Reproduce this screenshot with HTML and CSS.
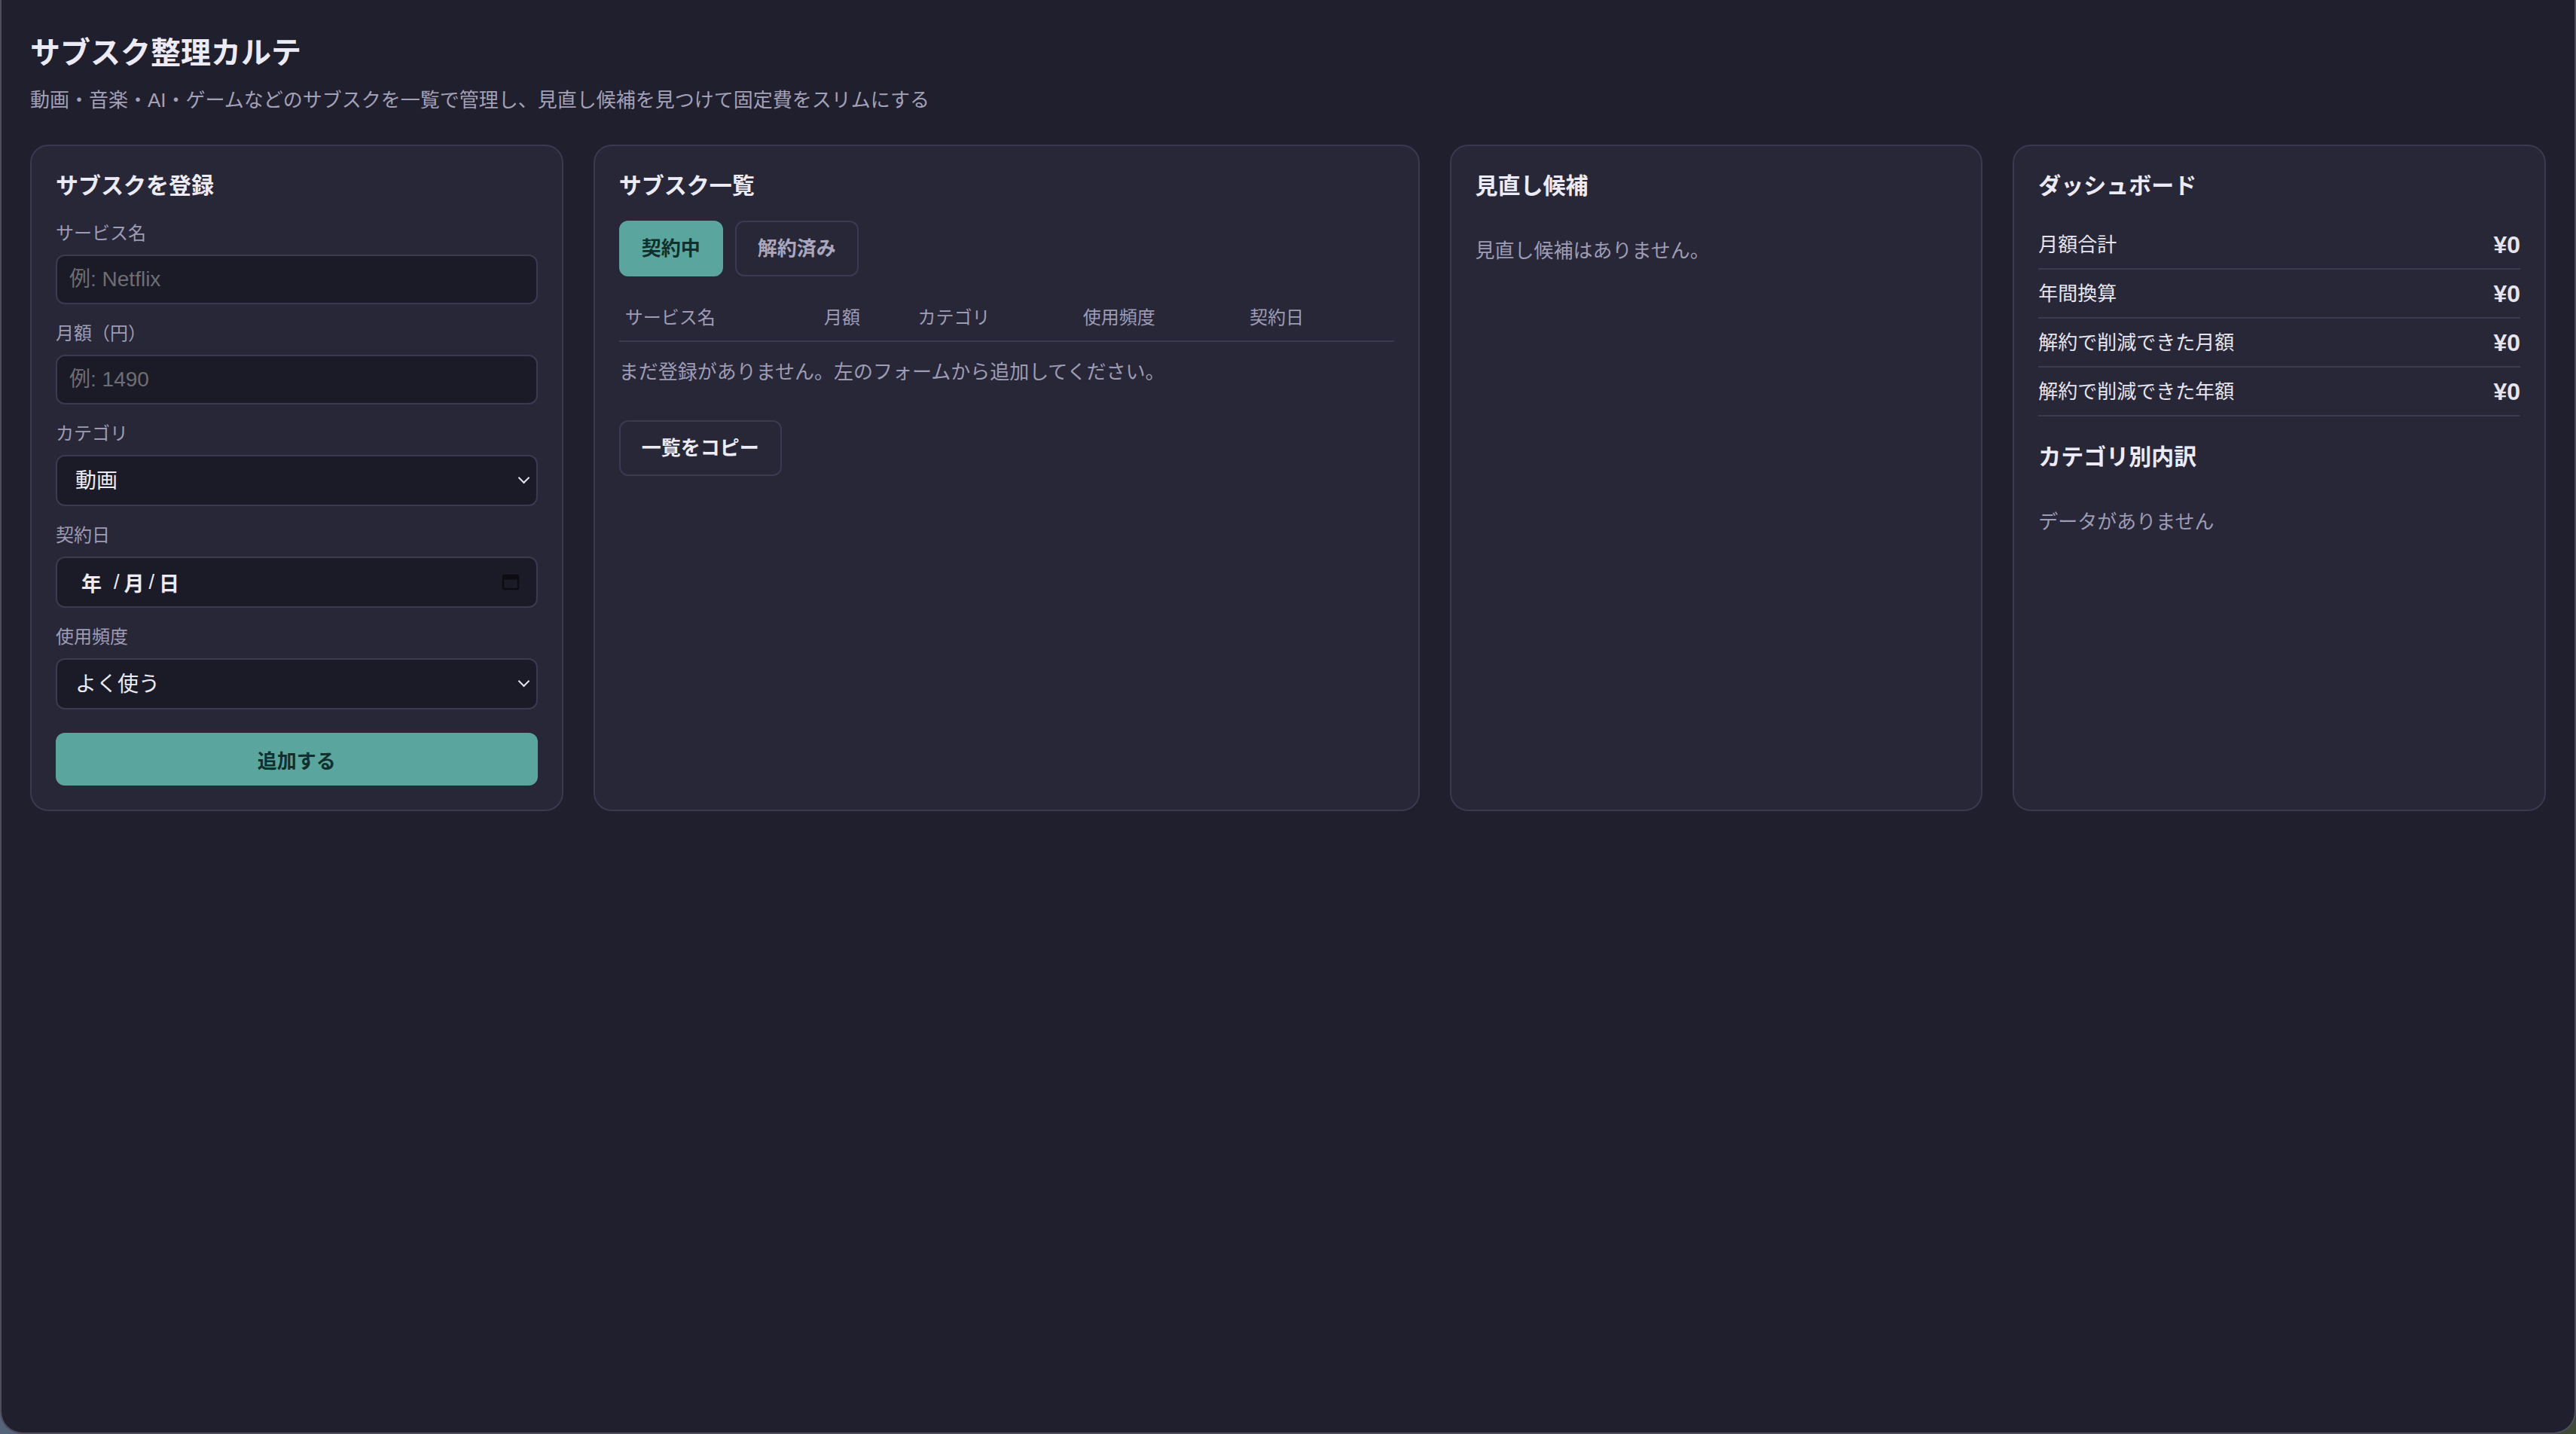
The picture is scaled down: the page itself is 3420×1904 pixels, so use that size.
FILE: index.html
```html
<html>
	<head>
		<meta charset="utf-8">
		<title>サブスク整理カルテ</title>
		<link rel="stylesheet" href="styles.css">
	</head>

	<body>
		<div id="window">
			<h1>サブスク整理カルテ</h1>
			<p class="lead">動画・音楽・AI・ゲームなどのサブスクを一覧で管理し、見直し候補を見つけて固定費をスリムにする</p>

			<div class="board">
				<!-- 登録フォーム -->
				<div class="card">
					<h2>サブスクを登録</h2>
					<div class="field">
						<label>サービス名</label>
						<input type="text" class="input" placeholder="例: Netflix">
					</div>
					<div class="field">
						<label>月額（円）</label>
						<input type="text" class="input" placeholder="例: 1490">
					</div>
					<div class="field">
						<label>カテゴリ</label>
						<div class="select-wrap">
							<select class="input select">
								<option>動画</option>
								<option>音楽</option>
								<option>AI</option>
								<option>ゲーム</option>
								<option>その他</option>
							</select>
						</div>
					</div>
					<div class="field">
						<label>契約日</label>
						<div class="input date">
							<span>年</span><span class="sep first">/</span><span>月</span><span class="sep">/</span><span>日</span>
							<svg class="cal" width="24" height="24" viewBox="0 0 24 24">
								<rect x="2" y="3" width="20" height="18" rx="1.5" fill="none" stroke="#0c0c12" stroke-width="2.4"/>
								<rect x="2" y="3" width="20" height="5.5" fill="#0c0c12"/>
							</svg>
						</div>
					</div>
					<div class="field">
						<label>使用頻度</label>
						<div class="select-wrap">
							<select class="input select">
								<option>よく使う</option>
								<option>たまに使う</option>
								<option>ほぼ使わない</option>
							</select>
						</div>
					</div>
					<button class="btn-primary">追加する</button>
				</div>

				<!-- 一覧 -->
				<div class="card">
					<h2>サブスク一覧</h2>
					<div class="tabs">
						<button class="btn active">契約中</button>
						<button class="btn">解約済み</button>
					</div>
					<table class="list">
						<thead>
							<tr>
								<th class="c-name">サービス名</th>
								<th class="c-price">月額</th>
								<th class="c-cat">カテゴリ</th>
								<th class="c-use">使用頻度</th>
								<th>契約日</th>
							</tr>
						</thead>
					</table>
					<p class="muted list-empty">まだ登録がありません。左のフォームから追加してください。</p>
					<div class="list-actions">
						<button class="btn light">一覧をコピー</button>
					</div>
				</div>

				<!-- 見直し候補 -->
				<div class="card">
					<h2>見直し候補</h2>
					<p class="muted empty">見直し候補はありません。</p>
				</div>

				<!-- ダッシュボード -->
				<div class="card">
					<h2>ダッシュボード</h2>
					<div class="stat"><span>月額合計</span><b>¥0</b></div>
					<div class="stat"><span>年間換算</span><b>¥0</b></div>
					<div class="stat"><span>解約で削減できた月額</span><b>¥0</b></div>
					<div class="stat"><span>解約で削減できた年額</span><b>¥0</b></div>
					<h3>カテゴリ別内訳</h3>
					<p class="muted empty">データがありません</p>
				</div>
			</div>
		</div>
	</body>

</html>
```

FILE: styles.css
```css
* {
	box-sizing: border-box;
}
html, body {
	margin: 0;
	height: 100%;
}
body {
	background: linear-gradient(90deg, #56647a 0%, #3b4752 50%, #3e4a36 100%);
	font-family: "Liberation Sans", "Noto Sans CJK JP", sans-serif;
	color: #ecebf5;
}
#window {
	min-height: 100vh;
	background: #1f1f2d;
	border: 2px solid #4d4d5e;
	border-top: 0;
	border-radius: 0 0 30px 30px;
	padding: 42px 38px;
}
h1 {
	margin: 0 0 17px;
	font-size: 40px;
	line-height: 56px;
	font-weight: bold;
}
.lead {
	margin: 0 0 41px;
	font-size: 26px;
	line-height: 36px;
	color: #a3a1b8;
}
.board {
	display: grid;
	grid-template-columns: 1fr 1.55fr 1fr 1fr;
	gap: 40px;
}
.card {
	background: #272738;
	border: 2px solid #393950;
	border-radius: 24px;
	padding: 32px;
}
h2 {
	margin: 0 0 25px;
	font-size: 30px;
	line-height: 42px;
}
h3 {
	margin: 33px 0 25px;
	font-size: 30px;
	line-height: 42px;
}
.muted {
	color: #9e9cb4;
	font-size: 26px;
	line-height: 36px;
	margin: 0;
}
.empty {
	padding-top: 22px;
}

/* form */
.field {
	margin-bottom: 22px;
}
.field label {
	display: block;
	font-size: 24px;
	line-height: 34px;
	color: #9e9cb4;
	margin-bottom: 11px;
}
.input {
	display: block;
	width: 100%;
	height: 66px;
	background: #1b1b27;
	border: 2px solid #3a3a52;
	border-radius: 12px;
	padding: 0 16px;
	font-family: "Liberation Sans", "Noto Sans CJK JP", sans-serif;
	font-size: 28px;
	color: #ecebf5;
	outline: none;
}
.input::placeholder {
	color: #6e6e72;
}
.select-wrap {
	position: relative;
}
.select {
	height: 68px;
	padding-left: 24px;
	-webkit-appearance: none;
	appearance: none;
}
.select-wrap::after {
	content: "";
	position: absolute;
	right: 13px;
	top: 25px;
	width: 9px;
	height: 9px;
	border-right: 2px solid #e6e5ef;
	border-bottom: 2px solid #e6e5ef;
	transform: rotate(45deg);
	pointer-events: none;
}
.date {
	height: 68px;
	display: flex;
	align-items: center;
	padding-left: 32px;
	font-weight: bold;
	font-size: 27px;
}
.date .sep {
	font-weight: normal;
	margin: 0 6px;
}
.date .sep.first {
	margin-left: 16px;
}
.date .cal {
	margin-left: auto;
	margin-right: 6px;
}
/* .field の margin-bottom と相殺されるので大きめに */
.btn-primary {
	display: block;
	width: 100%;
	height: 70px;
	margin-top: 31px;
	background: #5ba59f;
	color: #11302c;
	border: 0;
	border-radius: 12px;
	font-family: "Liberation Sans", "Noto Sans CJK JP", sans-serif;
	font-size: 26px;
	font-weight: bold;
}

/* list */
.tabs {
	display: flex;
	gap: 16px;
	margin-bottom: 26px;
}
.btn {
	padding: 17px 28px;
	border: 2px solid #3a3a52;
	border-radius: 12px;
	background: transparent;
	color: #a9a7bf;
	font-family: "Liberation Sans", "Noto Sans CJK JP", sans-serif;
	font-size: 26px;
	line-height: 36px;
	font-weight: bold;
}
.btn.active {
	background: #5ba59f;
	border-color: #5ba59f;
	color: #11302c;
}
.btn.light {
	color: #ecebf5;
}
.list {
	width: 100%;
	border-collapse: collapse;
}
.list th {
	text-align: left;
	font-weight: normal;
	font-size: 24px;
	line-height: 34px;
	color: #9e9cb4;
	padding: 12px 8px 13px;
	border-bottom: 2px solid #3a3a50;
}
.c-name { width: 25.7%; }
.c-price { width: 12.1%; }
.c-cat { width: 21.3%; }
.c-use { width: 21.5%; }
.list-empty {
	margin-top: 22px;
}
.list-actions {
	margin-top: 46px;
}

/* dashboard */
.stat {
	display: flex;
	justify-content: space-between;
	padding: 14px 0 13px;
	border-bottom: 2px solid #3a3a50;
	font-size: 26px;
	line-height: 36px;
	color: #e6e5ef;
}
.stat b {
	font-size: 32px;
}
```
